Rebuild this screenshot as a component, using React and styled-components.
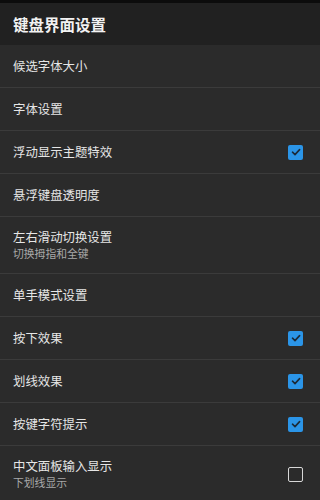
import React, { useState } from 'react'
import styled, { createGlobalStyle } from 'styled-components'

const GlobalStyle = createGlobalStyle`
  html, body {
    margin: 0;
    padding: 0;
    background: #2b2b2b;
  }
  body {
    font-family: "Noto Sans CJK SC", "Noto Sans", sans-serif;
  }
`;

const items = [
  { title: '候选字体大小' },
  { title: '字体设置' },
  { title: '浮动显示主题特效', check: true },
  { title: '悬浮键盘透明度' },
  { title: '左右滑动切换设置', sub: '切换拇指和全键' },
  { title: '单手模式设置' },
  { title: '按下效果', check: true },
  { title: '划线效果', check: true },
  { title: '按键字符提示', check: true },
  { title: '中文面板输入显示', sub: '下划线显示', check: false },
];

const App = () => {
  const [checks, setChecks] = useState(items.map((i) => i.check));

  const toggle = (idx) => {
    setChecks((c) => c.map((v, i) => (i === idx ? !v : v)));
  };

  return (
    <Wrap>
      <GlobalStyle />
      <StatusBar />
      <Header>键盘界面设置</Header>
      <List>
        {items.map((item, idx) => (
          <Row key={item.title} $tall={!!item.sub} onClick={() => toggle(idx)}>
            <Texts>
              <Title>{item.title}</Title>
              {item.sub && <Sub>{item.sub}</Sub>}
            </Texts>
            {item.check !== undefined && (
              <Box $on={checks[idx]}>
                {checks[idx] && (
                  <svg width="10" height="10" viewBox="0 0 10 10">
                    <path d="M1.5 5.2 L4 7.6 L8.6 2.6" fill="none" stroke="#1c2a38" strokeWidth="1.6" strokeLinecap="round" strokeLinejoin="round" />
                  </svg>
                )}
              </Box>
            )}
          </Row>
        ))}
      </List>
    </Wrap>
  );
};

const Wrap = styled.div`
  width: 320px;
  height: 500px;
  overflow: hidden;
  background: #2b2b2b;
`;

const StatusBar = styled.div`
  height: 3px;
  background: #0c0c0c;
`;

const Header = styled.div`
  height: 42px;
  background: #212121;
  color: #f2f2f2;
  font-size: 15.5px;
  font-weight: bold;
  display: flex;
  align-items: center;
  padding-left: 13px;
`;

const List = styled.div`
  display: flex;
  flex-direction: column;
`;

const Row = styled.div`
  height: ${(p) => (p.$tall ? '56px' : '42px')};
  border-bottom: 1px solid #3b3b3b;
  display: flex;
  align-items: center;
  justify-content: space-between;
  padding: 0 17px 0 13px;
  cursor: pointer;
`;

const Texts = styled.div`
  display: flex;
  flex-direction: column;
`;

const Title = styled.div`
  color: #e6e6e6;
  font-size: 12.4px;
  line-height: 17px;
`;

const Sub = styled.div`
  color: #a8a8a8;
  font-size: 10.8px;
  line-height: 15px;
`;

const Box = styled.div`
  width: 15px;
  height: 15px;
  box-sizing: border-box;
  border-radius: 2px;
  background: ${(p) => (p.$on ? '#2b95e8' : 'transparent')};
  border: ${(p) => (p.$on ? 'none' : '1.5px solid #d8d8d8')};
  display: flex;
  align-items: center;
  justify-content: center;
`;

export default App;
